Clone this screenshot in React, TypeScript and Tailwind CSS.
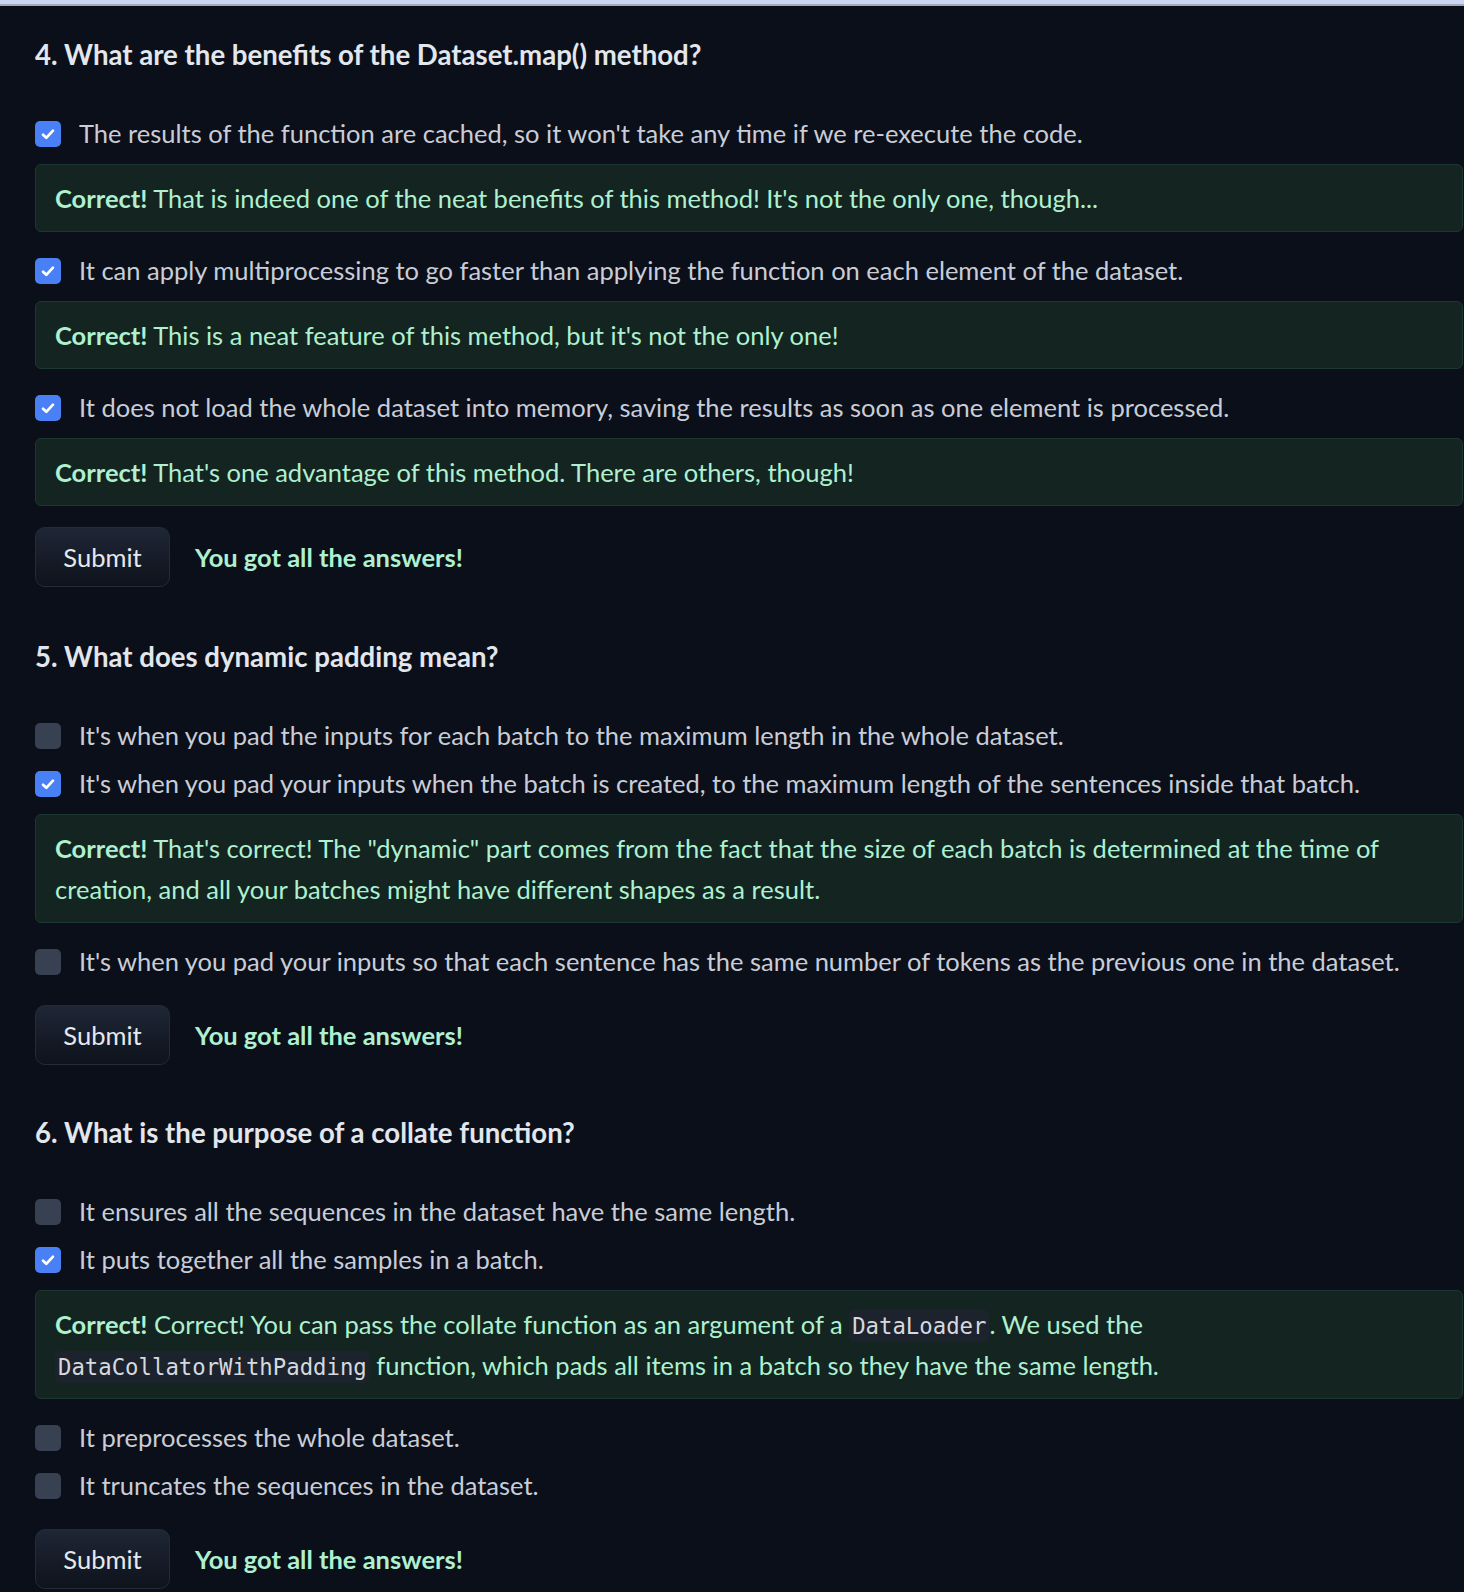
import React from "react";

type Opt = { text: React.ReactNode; checked: boolean; feedback?: React.ReactNode };

function Code({ children }: { children: React.ReactNode }) {
  return (
    <code className="rounded-[5px] bg-[#1c232d] px-[3px] py-[3px] font-['DejaVu_Sans_Mono',monospace] text-[22.3px] leading-none text-[#d6d9df]">
      {children}
    </code>
  );
}

function Checkbox({ checked }: { checked: boolean }) {
  if (checked) {
    return (
      <span className="flex h-[26px] w-[26px] shrink-0 items-center justify-center rounded-[5px] bg-[#4a80f5]">
        <svg viewBox="0 0 16 16" className="h-[18px] w-[18px]">
          <path
            d="M3.6 8.6l2.9 2.8 5.9-6.4"
            fill="none"
            stroke="white"
            strokeWidth="2.4"
            strokeLinecap="round"
            strokeLinejoin="round"
          />
        </svg>
      </span>
    );
  }
  return <span className="h-[26px] w-[26px] shrink-0 rounded-[5px] bg-[#374151]" />;
}

function Feedback({ children }: { children: React.ReactNode }) {
  return (
    <div className="mt-[10px] mb-[11px] rounded-[6px] border border-[#1c3831] bg-[#132421] px-[19px] py-[12.5px] leading-[41px] text-[#aef0cf]">
      <span className="font-bold">Correct!</span> {children}
    </div>
  );
}

function Question({
  title,
  options,
  submitMt,
  className,
}: {
  title: string;
  options: Opt[];
  submitMt: string;
  className?: string;
}) {
  return (
    <section className={className}>
      <h3 className="h-[41px] text-[27.6px] font-bold leading-[41px] text-[#e2e6ed]">{title}</h3>
      <div className="mt-[38px] flex flex-col gap-[7px]">
        {options.map((o, i) => (
          <div key={i} className="flex flex-col">
            <label className="flex h-[41px] items-center gap-[18px] leading-[41px] text-[#c8cdd7]">
              <Checkbox checked={o.checked} />
              <span className="whitespace-nowrap">{o.text}</span>
            </label>
            {o.feedback ? <Feedback>{o.feedback}</Feedback> : null}
          </div>
        ))}
      </div>
      <div className={`flex items-center gap-[25px] ${submitMt}`}>
        <button className="h-[60px] w-[135px] rounded-[10px] border border-[#232b39] bg-gradient-to-b from-[#1f2635] to-[#0e131c] text-[#e6e8ec]">
          Submit
        </button>
        <span className="font-bold text-[#aef0cf]">You got all the answers!</span>
      </div>
    </section>
  );
}

export default function App() {
  return (
    <div className="min-h-screen bg-[#0b0f19] font-['Lato',sans-serif] text-[25.5px]">
      <div className="h-[4px] bg-[#c9d5f1]" />
      <div className="h-[2px] bg-[#a2aabb]" />
      <main className="pl-[35px] pr-[1px] pt-[28px]">
        <Question
          title="4. What are the benefits of the Dataset.map() method?"
          submitMt="mt-[10px]"
          options={[
            {
              text: "The results of the function are cached, so it won't take any time if we re-execute the code.",
              checked: true,
              feedback: "That is indeed one of the neat benefits of this method! It's not the only one, though...",
            },
            {
              text: "It can apply multiprocessing to go faster than applying the function on each element of the dataset.",
              checked: true,
              feedback: "This is a neat feature of this method, but it's not the only one!",
            },
            {
              text: "It does not load the whole dataset into memory, saving the results as soon as one element is processed.",
              checked: true,
              feedback: "That's one advantage of this method. There are others, though!",
            },
          ]}
        />
        <Question
          className="mt-[49px]"
          title="5. What does dynamic padding mean?"
          submitMt="mt-[23px]"
          options={[
            {
              text: "It's when you pad the inputs for each batch to the maximum length in the whole dataset.",
              checked: false,
            },
            {
              text: "It's when you pad your inputs when the batch is created, to the maximum length of the sentences inside that batch.",
              checked: true,
              feedback: (
                <>
                  That's correct! The "dynamic" part comes from the fact that the size of each batch is determined at the time of
                  <br />
                  creation, and all your batches might have different shapes as a result.
                </>
              ),
            },
            {
              text: "It's when you pad your inputs so that each sentence has the same number of tokens as the previous one in the dataset.",
              checked: false,
            },
          ]}
        />
        <Question
          className="mt-[47px]"
          title="6. What is the purpose of a collate function?"
          submitMt="mt-[23px]"
          options={[
            { text: "It ensures all the sequences in the dataset have the same length.", checked: false },
            {
              text: "It puts together all the samples in a batch.",
              checked: true,
              feedback: (
                <>
                  Correct! You can pass the collate function as an argument of a <Code>DataLoader</Code>. We used the
                  <br />
                  <Code>DataCollatorWithPadding</Code> function, which pads all items in a batch so they have the same length.
                </>
              ),
            },
            { text: "It preprocesses the whole dataset.", checked: false },
            { text: "It truncates the sequences in the dataset.", checked: false },
          ]}
        />
      </main>
    </div>
  );
}
